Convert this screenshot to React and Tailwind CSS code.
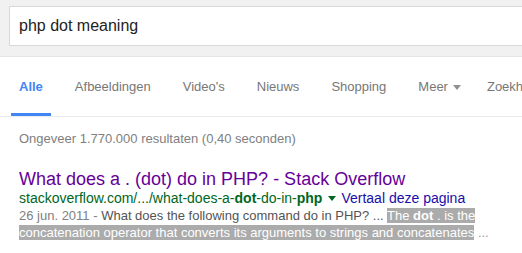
const tabs = ['Afbeeldingen', "Video's", 'Nieuws', 'Shopping'];

const App = () => {
  return (
    <div
      className="w-[522px] h-[253px] overflow-hidden bg-white"
      style={{ fontFamily: '"Liberation Sans", Arial, sans-serif' }}
    >
      {/* search header */}
      <div className="h-[57px] bg-[#f1f1f1] border-b border-[#e5e5e5] pt-[6px] pl-[9px]">
        <div className="w-[600px] h-[40px] bg-white border border-[#d9d9d9] flex items-center pl-[9px]">
          <span className="text-[16px] text-[#222] leading-none">php dot meaning</span>
        </div>
      </div>

      {/* tabs */}
      <div className="h-[60px] border-b border-[#ebebeb] flex pl-[11px] gap-[16px] whitespace-nowrap text-[13px]">
        <div className="relative px-[8px] flex items-center text-[#4285f4] font-bold">
          Alle
          <div className="absolute left-0 right-0 bottom-0 h-[3px] bg-[#4285f4]" />
        </div>
        {tabs.map(tab => (
          <div key={tab} className="px-[8px] flex items-center text-[#777]">
            {tab}
          </div>
        ))}
        <div className="px-[8px] flex items-center text-[#777]">
          Meer
          <span className="ml-[5px] mt-[1px] w-0 h-0 border-l-[4px] border-r-[4px] border-t-[5px] border-l-transparent border-r-transparent border-t-[#909090]" />
        </div>
        <div className="pl-[2px] flex items-center text-[#777]">Zoekhulpmiddelen</div>
      </div>

      {/* results */}
      <div className="pl-[19px] whitespace-nowrap">
        <p className="mt-[13px] text-[13px] leading-[18px] text-[#808080]">
          Ongeveer 1.770.000 resultaten (0,40 seconden)
        </p>

        <p className="mt-[20px] text-[18px] leading-[22px] text-[#660099]">
          What does a . (dot) do in PHP? - Stack Overflow
        </p>

        <p className="text-[14px] leading-[16px] text-[#006621] flex items-center">
          <span>
            stackoverflow.com/.../what-does-a-<b>dot</b>-do-in-<b>php</b>
          </span>
          <span className="ml-[6px] mr-[5px] mt-[1px] w-0 h-0 border-l-[4px] border-r-[4px] border-t-[5px] border-l-transparent border-r-transparent border-t-[#006621]" />
          <span className="text-[#1a0dab]">Vertaal deze pagina</span>
        </p>

        <div className="mt-[1px] text-[13px] leading-[17px] text-[#545454]">
          <p>
            <span className="text-[#808080]">26 jun. 2011 - </span>
            What does the following command do in PHP? ...{' '}
            <span className="bg-[#ababab] text-white">
              The <b>dot</b> . is the{' '}
            </span>
          </p>
          <p>
            <span className="bg-[#ababab] text-white">
              concatenation operator that converts its arguments to strings and concatenates
            </span>
            <span className="text-[#999]"> ...</span>
          </p>
        </div>
      </div>
    </div>
  );
};

export default App;
